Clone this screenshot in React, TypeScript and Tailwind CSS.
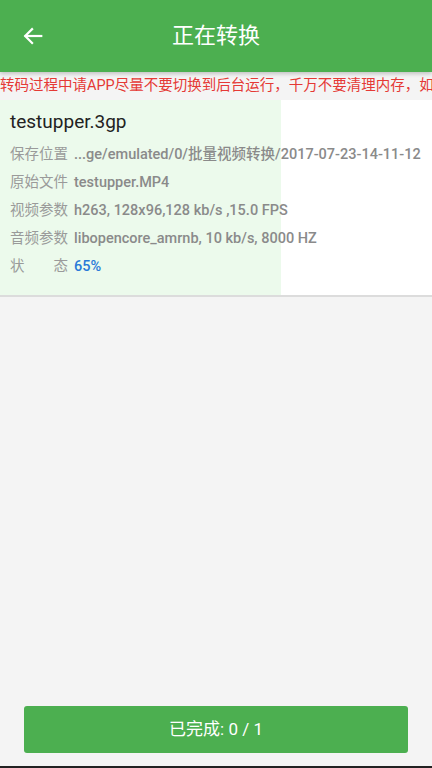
import React from "react";

const font = { fontFamily: 'Roboto, "Noto Sans CJK SC", sans-serif' };

export default function App() {
  const rows: [string, string][] = [
    ["保存位置", "...ge/emulated/0/批量视频转换/2017-07-23-14-11-12"],
    ["原始文件", "testupper.MP4"],
    ["视频参数", "h263, 128x96,128 kb/s ,15.0 FPS"],
    ["音频参数", "libopencore_amrnb, 10 kb/s, 8000 HZ"],
  ];
  return (
    <div className="w-[432px] h-[768px] bg-[#f4f4f4] flex flex-col overflow-hidden relative" style={font}>
      <div className="h-[72px] bg-[#4caf50] flex items-center relative shadow-[0_2px_4px_rgba(0,0,0,0.2)] z-10 shrink-0">
        <svg className="absolute left-[22px]" width="22" height="22" viewBox="0 0 24 24" fill="none" stroke="white" strokeWidth="2.4" strokeLinecap="square">
          <path d="M21 12H4" />
          <path d="M11 4.5L3.5 12L11 19.5" />
        </svg>
        <div className="flex-1 text-center text-white text-[22px] leading-none">正在转换</div>
      </div>
      <div className="h-[28px] flex items-center whitespace-nowrap overflow-hidden text-[#e53935] text-[14.5px] leading-none shrink-0">
        转码过程中请APP尽量不要切换到后台运行，千万不要清理内存，如果
      </div>
      <div className="relative bg-white h-[197px] border-b-2 border-[#dcdcdc] shrink-0">
        <div className="absolute left-0 top-0 bottom-0 bg-[#ecfaec]" style={{ width: "65%" }} />
        <div className="relative pl-[10px] pt-[8px]">
          <div className="text-[19px] leading-[28px] text-[#222]">testupper.3gp</div>
          <div className="flex flex-col mt-[5px]">
            {rows.map(([k, v]) => (
              <div key={k} className="h-[28px] flex items-center whitespace-nowrap text-[14.5px]">
                <span className="text-[#9a9a9a] w-[64px]">{k}</span>
                <span className="text-[#8a8a8a] font-medium">{v}</span>
              </div>
            ))}
            <div className="h-[28px] flex items-center whitespace-nowrap text-[14.5px]">
              <span className="text-[#9a9a9a] w-[64px] flex justify-between pr-[6px]"><span>状</span><span>态</span></span>
              <span className="text-[#2979d8] font-medium">65%</span>
            </div>
          </div>
        </div>
      </div>
      <div className="flex-1" />
      <div className="px-[24px] pb-[13px]">
        <div className="h-[47px] bg-[#4caf50] rounded-[3px] flex items-center justify-center text-white text-[17px]">
          已完成: 0 / 1
        </div>
      </div>
      <div className="h-[2px] bg-[#222] shrink-0" />
    </div>
  );
}
